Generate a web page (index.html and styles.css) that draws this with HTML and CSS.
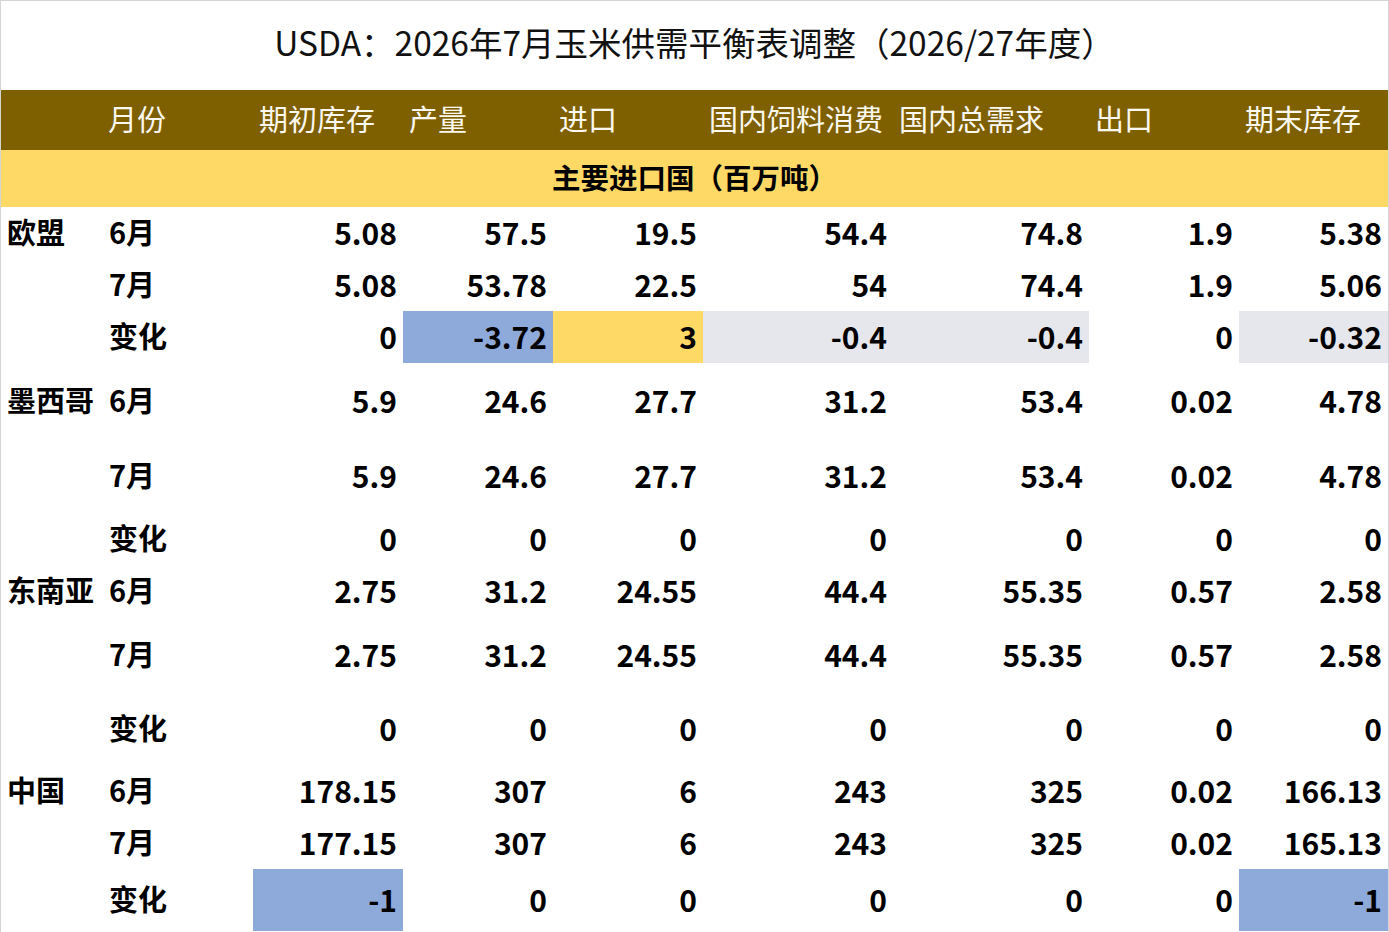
FILE: index.html
```html
<!DOCTYPE html>
<html lang="zh-CN">
<head>
<meta charset="utf-8">
<title>USDA 玉米供需平衡表调整</title>
<link rel="stylesheet" href="styles.css">
</head>
<body>
<div class="sheet">
  <div class="title">USDA：2026年7月玉米供需平衡表调整（2026/27年度）</div>
  <table class="grid">
    <colgroup>
      <col class="c-country"><col class="c-month"><col class="c-n"><col class="c-n"><col class="c-n"><col class="c-feed"><col class="c-total"><col class="c-n"><col class="c-last">
    </colgroup>
    <thead>
      <tr class="head">
        <th></th><th>月份</th><th>期初库存</th><th>产量</th><th>进口</th><th>国内饲料消费</th><th>国内总需求</th><th>出口</th><th>期末库存</th>
      </tr>
      <tr class="sub">
        <th colspan="9">主要进口国（百万吨）</th>
      </tr>
    </thead>
    <tbody>
      <tr class="h52"><td class="country">欧盟</td><td class="month">6月</td><td>5.08</td><td>57.5</td><td>19.5</td><td>54.4</td><td>74.8</td><td>1.9</td><td>5.38</td></tr>
      <tr class="h52"><td></td><td class="month">7月</td><td>5.08</td><td>53.78</td><td>22.5</td><td>54</td><td>74.4</td><td>1.9</td><td>5.06</td></tr>
      <tr class="h52"><td></td><td class="month">变化</td><td>0</td><td class="blue">-3.72</td><td class="yellow">3</td><td class="gray">-0.4</td><td class="gray">-0.4</td><td>0</td><td class="gray">-0.32</td></tr>

      <tr class="h76"><td class="country">墨西哥</td><td class="month">6月</td><td>5.9</td><td>24.6</td><td>27.7</td><td>31.2</td><td>53.4</td><td>0.02</td><td>4.78</td></tr>
      <tr class="h74"><td></td><td class="month">7月</td><td>5.9</td><td>24.6</td><td>27.7</td><td>31.2</td><td>53.4</td><td>0.02</td><td>4.78</td></tr>
      <tr class="h52"><td></td><td class="month">变化</td><td>0</td><td>0</td><td>0</td><td>0</td><td>0</td><td>0</td><td>0</td></tr>

      <tr class="h52"><td class="country">东南亚</td><td class="month">6月</td><td>2.75</td><td>31.2</td><td>24.55</td><td>44.4</td><td>55.35</td><td>0.57</td><td>2.58</td></tr>
      <tr class="h76"><td></td><td class="month">7月</td><td>2.75</td><td>31.2</td><td>24.55</td><td>44.4</td><td>55.35</td><td>0.57</td><td>2.58</td></tr>
      <tr class="h72"><td></td><td class="month">变化</td><td>0</td><td>0</td><td>0</td><td>0</td><td>0</td><td>0</td><td>0</td></tr>

      <tr class="h52"><td class="country">中国</td><td class="month">6月</td><td>178.15</td><td>307</td><td>6</td><td>243</td><td>325</td><td>0.02</td><td>166.13</td></tr>
      <tr class="h52"><td></td><td class="month">7月</td><td>177.15</td><td>307</td><td>6</td><td>243</td><td>325</td><td>0.02</td><td>165.13</td></tr>
      <tr class="h62"><td></td><td class="month">变化</td><td class="blue">-1</td><td>0</td><td>0</td><td>0</td><td>0</td><td>0</td><td class="blue">-1</td></tr>
    </tbody>
  </table>
</div>
</body>
</html>
```

FILE: styles.css
```css
* { box-sizing: border-box; }

html, body {
  margin: 0;
  padding: 0;
  background: #ffffff;
}

body {
  font-family: "Noto Sans CJK SC", "Noto Sans", sans-serif;
  color: #000;
}

.sheet {
  width: 1389px;
  height: 932px;
  border: 1px solid #d4d4d4;
  border-bottom: none;
  overflow: hidden;
}

.title {
  height: 89px;
  display: flex;
  align-items: center;
  justify-content: center;
  font-size: 33.5px;
  font-weight: 400;
  color: #111;
  padding-bottom: 7px;
  line-height: 1;
}

.grid {
  width: 1387px;
  table-layout: fixed;
  border-collapse: collapse;
  border-spacing: 0;
}

.c-country { width: 101px; }
.c-month { width: 151px; }
.c-n { width: 150px; }
.c-feed { width: 190px; }
.c-total { width: 196px; }
.c-last { width: 149px; }

th, td {
  padding: 0 6px 3px;
  white-space: nowrap;
  overflow: visible;
  vertical-align: middle;
}

.head th {
  height: 60px;
  background: #7f6000;
  color: #fbf8ef;
  font-weight: 400;
  font-size: 29px;
  text-align: left;
  line-height: 1;
}

.sub th {
  height: 57px;
  background: #ffd966;
  color: #000;
  font-weight: 700;
  font-size: 28.5px;
  text-align: center;
  line-height: 1;
}

tbody td {
  font-size: 30px;
  font-weight: 700;
  text-align: right;
  line-height: 1;
}

tbody td.country {
  text-align: left;
  padding-left: 6px;
  padding-right: 0;
  font-size: 29px;
}

tbody td.month {
  text-align: left;
  padding-left: 7px;
  font-size: 29px;
}

.h52 td { height: 52px; }
.h62 td { height: 62px; }
.h72 td { height: 72px; }
.h74 td { height: 74px; }
.h76 td { height: 76px; }

.blue { background: #8eaadb; }
.yellow { background: #ffd966; }
.gray { background: #e6e7ed; }
```
